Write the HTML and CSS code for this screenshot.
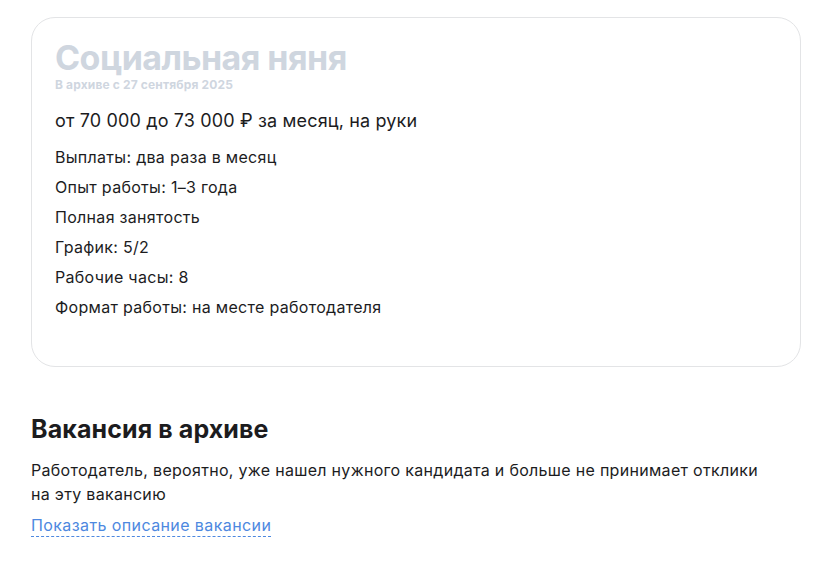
FILE: index.html
```html
<!DOCTYPE html>
<html lang="ru">
<head>
<meta charset="utf-8">
<link rel="stylesheet" href="styles.css">
</head>
<body>
<main class="page">
  <section class="card">
    <h1 class="title">Социальная няня</h1>
    <p class="archived">В архиве с 27 сентября 2025</p>
    <p class="salary">от 70&nbsp;000 до 73&nbsp;000&nbsp;₽ за месяц, на руки</p>
    <ul class="facts">
      <li>Выплаты: два раза в месяц</li>
      <li>Опыт работы: 1–3 года</li>
      <li>Полная занятость</li>
      <li>График: 5/2</li>
      <li>Рабочие часы: 8</li>
      <li>Формат работы: на месте работодателя</li>
    </ul>
  </section>
  <section class="archive">
    <h2 class="archive-title">Вакансия в архиве</h2>
    <p class="archive-text">Работодатель, вероятно, уже нашел нужного кандидата и больше не принимает отклики на эту вакансию</p>
    <a class="show-link" href="#">Показать описание вакансии</a>
  </section>
</main>
</body>
</html>
```
FILE: styles.css
```css
* { box-sizing: border-box; }
html, body { margin: 0; padding: 0; background: #fff; }
body {
  font-family: Inter, "Noto Sans", sans-serif;
  color: #1c1c1e;
}
.page {
  padding: 17px 24px 0 31px;
  width: 825px;
}
.card {
  border: 1px solid #e3e4e6;
  border-radius: 24px;
  padding: 22px 23px 40px;
  height: 350px;
}
.title {
  margin: 0;
  font-size: 34px;
  line-height: 36px;
  font-weight: 700;
  color: #cfd6df;
  letter-spacing: -0.55px;
}
.archived {
  margin: 1px 0 0;
  font-size: 12px;
  line-height: 16px;
  font-weight: 700;
  color: #cfd6df;
  letter-spacing: 0.15px;
}
.salary {
  margin: 14px 0 0;
  font-size: 18px;
  line-height: 28px;
  font-weight: 400;
  letter-spacing: 0.15px;
}
.facts {
  list-style: none;
  margin: 7px 0 0;
  padding: 0;
  font-size: 16px;
  line-height: 30px;
  letter-spacing: 0.3px;
}
.archive { padding-top: 44px; }
.archive-title {
  margin: 0;
  font-size: 25px;
  line-height: 36px;
  font-weight: 700;
  letter-spacing: 0.1px;
}
.archive-text {
  margin: 11px 0 0;
  font-size: 16px;
  line-height: 24px;
  max-width: 745px;
  letter-spacing: 0.3px;
}
.show-link {
  display: inline-block;
  margin-top: 8px;
  font-size: 16px;
  line-height: 22px;
  color: #4d88e0;
  text-decoration: none;
  border-bottom: 1px dashed #4d88e0;
  letter-spacing: 0.4px;
}
```
